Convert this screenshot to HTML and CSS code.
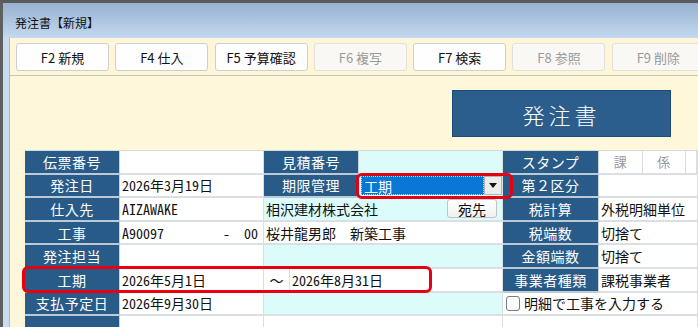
FILE: index.html
```html
<!DOCTYPE html>
<html lang="ja">
<head>
<meta charset="utf-8">
<title>発注書【新規】</title>
<link rel="stylesheet" href="styles.css">
</head>
<body>
<div class="window">
  <div class="titlebar">発注書【新規】</div>
  <div class="frame">
    <div class="client">
      <div class="toolbar">
        <button class="fbtn">F2 新規</button>
        <button class="fbtn">F4 仕入</button>
        <button class="fbtn">F5 予算確認</button>
        <button class="fbtn off">F6 複写</button>
        <button class="fbtn">F7 検索</button>
        <button class="fbtn off">F8 参照</button>
        <button class="fbtn off">F9 削除</button>
      </div>
      <div class="content">
        <div class="doc-head"><div class="doc-title">発注書</div></div>
        <div class="sheet">
          <div class="row">
            <div class="lab">伝票番号</div>
            <div class="val"></div>
            <div class="lab">見積番号</div>
            <div class="val cyan"></div>
            <div class="lab lab3">スタンプ</div>
            <div class="val3 stamps">
              <div class="stamp">課</div>
              <div class="stamp">係</div>
              <div class="stamp last"></div>
            </div>
          </div>
          <div class="row">
            <div class="lab">発注日</div>
            <div class="val">2026年3月19日</div>
            <div class="lab">期限管理</div>
            <div class="val cyan combo-cell">
              <div class="combo">
                <div class="combo-val">工期</div>
                <div class="combo-btn"><span class="tri"></span></div>
              </div>
            </div>
            <div class="lab lab3">第２区分</div>
            <div class="val3"></div>
          </div>
          <div class="row">
            <div class="lab">仕入先</div>
            <div class="val">AIZAWAKE</div>
            <div class="wide cyan">
              <span>相沢建材株式会社</span>
              <button class="sbtn">宛先</button>
            </div>
            <div class="lab lab3">税計算</div>
            <div class="val3">外税明細単位</div>
          </div>
          <div class="row">
            <div class="lab">工事</div>
            <div class="val split"><span>A90097</span><span class="sub">-&nbsp;&nbsp;00</span></div>
            <div class="wide">桜井龍男郎　新築工事</div>
            <div class="lab lab3">税端数</div>
            <div class="val3">切捨て</div>
          </div>
          <div class="row">
            <div class="lab">発注担当</div>
            <div class="val"></div>
            <div class="wide cyan"></div>
            <div class="lab lab3">金額端数</div>
            <div class="val3">切捨て</div>
          </div>
          <div class="row">
            <div class="lab">工期</div>
            <div class="val">2026年5月1日</div>
            <div class="tilde">〜</div>
            <div class="rest">2026年8月31日</div>
            <div class="lab lab3">事業者種類</div>
            <div class="val3">課税事業者</div>
          </div>
          <div class="row">
            <div class="lab">支払予定日</div>
            <div class="val">2026年9月30日</div>
            <div class="wide cyan"></div>
            <div class="check-cell"><span class="box"></span><span>明細で工事を入力する</span></div>
          </div>
          <div class="row">
            <div class="lab"></div>
            <div class="val"></div>
            <div class="wide"></div>
            <div class="check-cell"></div>
          </div>
        </div>
        <div class="hl hl-select"></div>
        <div class="hl hl-period"></div>
      </div>
    </div>
  </div>
</div>
</body>
</html>
```

FILE: styles.css
```css
html, body {
  margin: 0;
  padding: 0;
  width: 698px;
  height: 327px;
  overflow: hidden;
  background: #5c5c5c;
}

.window {
  width: 698px;
  height: 327px;
  overflow: hidden;
  border-top: 3px solid #5a5a5a;
  border-left: 3px solid #5f5f5f;
  box-sizing: border-box;
  font-family: "Noto Sans CJK JP", sans-serif;
  display: flex;
  flex-direction: column;
}

.titlebar {
  height: 35px;
  flex: none;
  box-sizing: border-box;
  padding: 4px 0 0 12px;
  display: flex;
  align-items: center;
  font-size: 12px;
  color: #111;
  background: linear-gradient(#97b1d0, #c3d9ef);
}

.frame {
  flex: 1;
  min-width: 0;
  background: #c9dcf1;
  padding-left: 6px;
  display: flex;
}

.client {
  flex: 1;
  min-width: 0;
  border-left: 1px solid #a9b9cb;
  background: #fff7da;
  display: flex;
  flex-direction: column;
}

.toolbar {
  height: 38px;
  flex: none;
  box-sizing: border-box;
  border-bottom: 1px solid #c9c6ba;
  padding: 5px 0 0 6px;
  display: flex;
  gap: 6.3px;
  background: #fff5d8;
}

.fbtn {
  width: 93px;
  flex: none;
  height: 28px;
  box-sizing: border-box;
  border: 1px solid #cfcfcf;
  border-radius: 3px;
  background: #fefefe;
  font-family: "Noto Sans CJK JP", sans-serif;
  font-size: 13px;
  color: #111;
  padding: 0;
}

.fbtn.off {
  color: #9a9a9a;
  background: #f9f8f4;
  border-color: #e2e0da;
}

.content {
  position: relative;
  flex: 1;
  padding-left: 15px;
}

.doc-head {
  display: flex;
  margin-top: 14px;
}

.doc-title {
  margin-left: 427px;
  width: 219px;
  height: 47px;
  background: #2b5e8c;
  border: 1px solid #1f4a73;
  box-sizing: border-box;
  color: #fff;
  font-size: 22px;
  font-weight: 300;
  letter-spacing: 4px;
  display: flex;
  align-items: center;
  justify-content: center;
}

.sheet {
  margin-top: 13px;
  border-top: 1px solid #d5dade;
  display: flex;
  flex-direction: column;
}

.row {
  height: 23.6px;
  display: flex;
  font-size: 14px;
}

.row > div {
  box-sizing: border-box;
  height: 100%;
  display: flex;
  align-items: center;
  border-bottom: 2px solid #dadfe3;
  border-right: 1px solid #dadfe3;
  white-space: nowrap;
}

.row > .lab {
  width: 95px;
  flex: none;
  justify-content: center;
  background: #295b89;
  color: #fff;
  border-bottom-color: #bcc9d6;
  border-right-color: #c8d2dc;
  letter-spacing: 0.5px;
}

.row > .lab3 {
  width: 96px;
}

.val, .wide, .rest, .val3, .tilde, .check-cell {
  background: #fff;
  color: #111;
  font-family: "Noto Sans Mono CJK JP", "Noto Sans CJK JP", monospace;
}

.row > .val {
  width: 144px;
  flex: none;
  padding-left: 2px;
}

.row > .wide {
  width: 239px;
  flex: none;
  padding-left: 2px;
  justify-content: space-between;
}

.row > .tilde {
  width: 26px;
  flex: none;
  justify-content: center;
}

.row > .rest {
  width: 213px;
  flex: none;
  padding-left: 2px;
}

.row > .val3 {
  flex: 1;
  min-width: 0;
  padding-left: 2px;
}

.row > .check-cell {
  flex: 1;
  min-width: 0;
  padding-left: 3px;
  gap: 4px;
}

.cyan {
  background: #dcfcfc !important;
}

.split {
  justify-content: space-between;
  padding-right: 4px;
}

.sub {
  margin-right: 1px;
}

.row > .stamps {
  padding-left: 0;
  align-items: stretch;
}

.stamp {
  width: 43.5px;
  flex: none;
  box-sizing: border-box;
  border-right: 1px solid #dcdcdc;
  display: flex;
  align-items: center;
  justify-content: center;
  color: #9a9a9a;
  font-size: 13px;
}

.stamp.last {
  flex: 1;
}

.combo-cell {
  padding: 0 !important;
  align-items: flex-end !important;
}

.combo {
  display: flex;
  width: 141px;
  height: 19px;
  margin: 0 0 1px 2px;
  background: #fff;
}

.combo-val {
  flex: 1;
  background: #0a77d6;
  color: #fff;
  outline: 1px dotted #e8d98a;
  outline-offset: -1px;
  padding-left: 3px;
  display: flex;
  align-items: center;
  font-family: "Noto Sans CJK JP", sans-serif;
  font-size: 14px;
}

.combo-btn {
  width: 18px;
  background: #ececec;
  border: 1px solid #b5b5b5;
  box-sizing: border-box;
  display: flex;
  align-items: center;
  justify-content: center;
}

.tri {
  width: 0;
  height: 0;
  border-left: 4px solid transparent;
  border-right: 4px solid transparent;
  border-top: 5px solid #111;
}

.sbtn {
  width: 50px;
  height: 19px;
  margin-right: 5px;
  padding: 0;
  box-sizing: border-box;
  border: 1px solid #c2c2c2;
  border-radius: 3px;
  background: linear-gradient(#ffffff, #f1f1f1);
  font-family: "Noto Sans CJK JP", sans-serif;
  font-size: 14px;
  color: #111;
  line-height: 1;
}

.box {
  width: 14px;
  height: 15px;
  flex: none;
  box-sizing: border-box;
  border: 1px solid #7d7d7d;
  border-radius: 3px;
  background: #fafafa;
}

.hl {
  position: absolute;
  box-sizing: border-box;
  border: 3px solid #e60012;
  border-radius: 6px;
  pointer-events: none;
}

.hl-select {
  left: 346px;
  top: 97px;
  width: 157px;
  height: 26px;
}

.hl-period {
  left: 12px;
  top: 190px;
  width: 410px;
  height: 27px;
}
```
